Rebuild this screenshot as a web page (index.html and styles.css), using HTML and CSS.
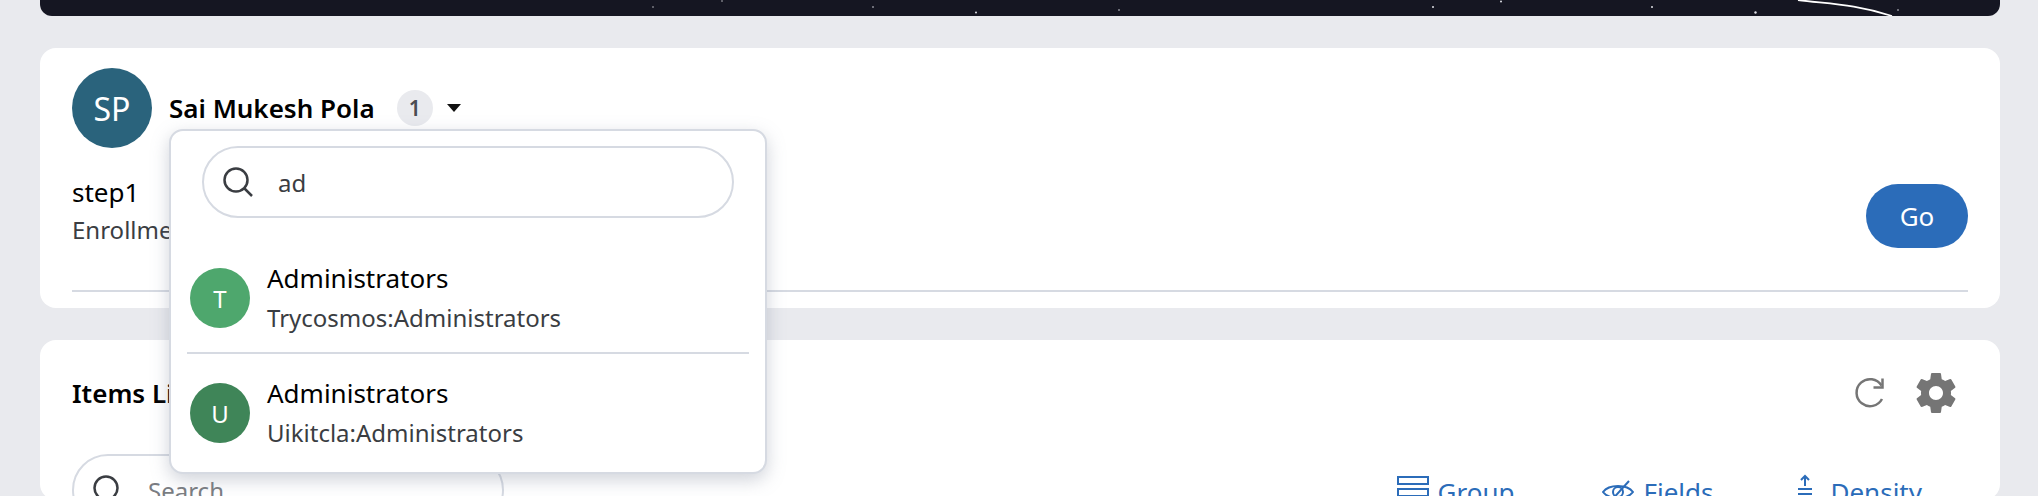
FILE: index.html
```html
<!DOCTYPE html>
<html lang="en">
<head>
<meta charset="utf-8">
<title>Items</title>
<link rel="stylesheet" href="styles.css">
</head>
<body>
<main class="page">
  <div class="banner">
    <svg class="banner-art" viewBox="0 0 1960 16" width="1960" height="16" aria-hidden="true">
      <g fill="#dfe0e6">
        <circle cx="613" cy="7" r=".7"/><circle cx="682" cy="1" r=".7"/><circle cx="833" cy="7" r=".8"/>
        <circle cx="936" cy="12.5" r="1"/><circle cx="1079" cy="10" r=".8"/><circle cx="1393" cy="7" r="1"/>
        <circle cx="1461" cy="1.5" r="1"/><circle cx="1612" cy="7" r="1"/><circle cx="1715.500" cy="12.500" r="1.200"/>
        <circle cx="1858" cy="10" r=".8"/>
      </g>
      <path d="M1758 0C1790 4 1815 4 1852 16" fill="none" stroke="#fff" stroke-width="1.800"/>
    </svg>
  </div>

  <section class="card card-enrol">
    <header class="person">
      <div class="avatar avatar-person">SP</div>
      <div class="person-line">
        <span class="person-name">Sai Mukesh Pola</span>
        <span class="count">1</span>
        <svg class="caret" viewBox="0 0 14 8" width="14" height="8" aria-hidden="true"><path d="M0 0h14L7 8z"/></svg>
      </div>
      <div class="popover">
        <div class="pop-search">
          <svg class="pop-search-icon" viewBox="0 0 30 30" width="30" height="30" aria-hidden="true"><circle cx="13" cy="13" r="11.500"/><path d="M21.500 21.500L29 29"/></svg>
          <span class="pop-search-text">ad</span>
        </div>
        <div class="pop-item">
          <div class="avatar avatar-t">T</div>
          <div class="pop-text">
            <div class="pop-title">Administrators</div>
            <div class="pop-sub">Trycosmos:Administrators</div>
          </div>
        </div>
        <div class="pop-item pop-item-divided">
          <div class="avatar avatar-u">U</div>
          <div class="pop-text">
            <div class="pop-title">Administrators</div>
            <div class="pop-sub">Uikitcla:Administrators</div>
          </div>
        </div>
      </div>
    </header>
    <div class="step">
      <div class="step-text">
        <div class="step-name">step1</div>
        <div class="step-desc">Enrollment</div>
      </div>
      <button class="go" type="button">Go</button>
    </div>
  </section>

  <section class="card card-items">
    <div class="items-head">
      <h2 class="items-title">Items List</h2>
      <div class="items-actions">
        <svg class="refresh" viewBox="0 0 32 32" width="32" height="32" aria-hidden="true"><path d="M27 22A13.500 13.500 0 1 1 26.500 8.500"/><path d="M27.500 1.500V10.500H18.500"/></svg>
        <svg class="gear" viewBox="0 0 24 24" width="48" height="48" aria-hidden="true"><path d="M19.430 12.980c.04-.32.070-.64.070-.98s-.03-.66-.07-.98l2.110-1.650c.19-.15.240-.42.120-.64l-2-3.460c-.12-.22-.39-.30-.61-.22l-2.490 1c-.52-.40-1.080-.73-1.690-.98l-.38-2.650C14.460 2.180 14.250 2 14 2h-4c-.25 0-.46.180-.49.420l-.38 2.650c-.61.250-1.170.590-1.690.98l-2.490-1c-.23-.090-.49 0-.61.220l-2 3.460c-.13.220-.07.490.12.640l2.110 1.650c-.04.320-.07.650-.07.980s.03.660.07.980l-2.110 1.650c-.19.150-.24.420-.12.640l2 3.460c.12.220.39.300.61.220l2.490-1c.52.400 1.080.730 1.690.980l.38 2.650c.03.240.24.420.49.420h4c.25 0 .46-.18.490-.42l.38-2.650c.61-.25 1.170-.59 1.690-.98l2.490 1c.23.090.49 0 .61-.22l2-3.460c.12-.22.07-.49-.12-.64l-2.110-1.650zM12 15.500c-1.930 0-3.500-1.570-3.500-3.500s1.570-3.500 3.500-3.500 3.500 1.570 3.500 3.500-1.570 3.500-3.500 3.500z"/></svg>
      </div>
    </div>
    <div class="toolbar">
      <div class="table-search">
        <svg class="table-search-icon" viewBox="0 0 30 30" width="30" height="30" aria-hidden="true"><circle cx="13" cy="13" r="11.500"/><path d="M21.500 21.500L29 29"/></svg>
        <span class="table-search-text">Search...</span>
      </div>
      <div class="tools">
        <div class="tool tool-group">
          <svg class="tool-icon" viewBox="0 0 32 32" width="32" height="32" aria-hidden="true"><path d="M1 1h30v7H1zM1 13h30v7H1zM1 25h30v7H1z"/></svg>
          <span>Group</span>
        </div>
        <div class="tool tool-fields">
          <svg class="tool-icon" viewBox="0 0 32 24" width="32" height="24" aria-hidden="true"><path d="M1 12C7 4 25 4 31 12C25 20 7 20 1 12Z"/><circle cx="16" cy="12" r="5"/><path d="M7 23L27 1"/></svg>
          <span>Fields</span>
        </div>
        <div class="tool tool-density">
          <svg class="tool-icon" viewBox="0 0 16 36" width="16" height="36" aria-hidden="true"><path d="M8 12V2M4 6l4-4 4 4M1 15h14M1 20h14M8 24v10"/></svg>
          <span>Density</span>
        </div>
      </div>
    </div>
  </section>
</main>
</body>
</html>
```
FILE: styles.css
```css
* { box-sizing: border-box; }
html, body { margin: 0; height: 496px; overflow: hidden; }
body { background: #e9eaee; font-family: "Noto Sans", "Open Sans", sans-serif; color: #000; }
.page { padding: 0 38px 0 40px; display: flex; flex-direction: column; }

.banner { height: 16px; background: #151622; border-radius: 0 0 12px 12px; overflow: hidden; margin-bottom: 32px; flex: none; }
.banner-art { display: block; }

.card { background: #fff; border-radius: 16px; padding: 20px 32px; flex: none; }
.card-enrol { height: 260px; margin-bottom: 32px; }
.card-items { height: 160px; padding-top: 28px; }

.avatar { border-radius: 50%; color: #fff; display: flex; align-items: center; justify-content: center; flex: none; }
.person { display: flex; align-items: flex-start; position: relative; height: 80px; }
.avatar-person { width: 80px; height: 80px; background: #2a637c; font-size: 32px; }
.person-line { display: flex; align-items: center; height: 36px; margin: 22px 0 0 17px; }
.person-name { font-size: 26px; font-weight: 600; line-height: 36px; }
.count { width: 36px; height: 36px; border-radius: 50%; background: #e9eaee; color: #4a4d52; font-size: 21px; font-weight: 600; display: flex; align-items: center; justify-content: center; margin-left: 22px; }
.caret { margin-left: 14px; fill: #111; }

.popover { position: absolute; left: 97px; top: 61px; width: 598px; height: 345px; background: #fff; border: 2px solid #d6dae2; border-radius: 14px; box-shadow: 0 6px 18px rgba(120,130,150,.35); padding: 15px 31px 0 31px; z-index: 5; }
.pop-search { height: 72px; border: 2px solid #d6dae2; border-radius: 36px; display: flex; align-items: center; padding-left: 19px; }
.pop-search-icon { fill: none; stroke: #3a3d42; stroke-width: 2.500; }
.pop-search-text { margin-left: 25px; font-size: 24px; color: #3a3d42; }
.pop-item { display: flex; align-items: center; margin: 0 -15px; padding: 0 0 0 3px; gap: 17px; }
.pop-item:first-of-type { margin-top: 0; }
.pop-search + .pop-item { margin-top: 26px; height: 110px; padding-bottom: 0; border-bottom: 2px solid #d6dae2; }
.pop-item-divided { height: 118px; }
.pop-item .avatar { width: 60px; height: 60px; font-size: 24px; }
.avatar-t { background: #4ea76d; }
.avatar-u { background: #3f8558; }
.pop-text { display: flex; flex-direction: column; gap: 10px; }
.pop-title { font-size: 26px; line-height: 30px; color: #000; }
.pop-sub { font-size: 24px; line-height: 30px; color: #3a3d42; }

.step { height: 124px; margin-top: 20px; border-bottom: 2px solid #d6dae2; display: flex; justify-content: space-between; align-items: flex-start; }
.step-text { padding-top: 9px; display: flex; flex-direction: column; gap: 8px; }
.step-name { font-size: 26px; line-height: 30px; }
.step-desc { font-size: 24px; line-height: 30px; color: #3a3d42; }
.go { width: 102px; height: 64px; margin-top: 16px; border: 0; border-radius: 32px; background: #2b6cb9; color: #fff; font: 26px "Noto Sans", sans-serif; }

.items-head { display: flex; justify-content: space-between; align-items: center; height: 50px; padding-right: 8px; }
.items-title { margin: 0; font-size: 26px; font-weight: 600; }
.items-actions { display: flex; align-items: center; gap: 25px; }
.refresh { fill: none; stroke: #757575; stroke-width: 2.500; }
.gear { fill: #757575; }

.toolbar { display: flex; justify-content: space-between; align-items: flex-start; margin-top: 36px; }
.table-search { width: 432px; height: 72px; border: 2px solid #d6dae2; border-radius: 36px; display: flex; align-items: center; padding-left: 19px; }
.table-search-icon { fill: none; stroke: #3a3d42; stroke-width: 2.500; flex: none; }
.table-search-text { margin-left: 25px; font-size: 24px; color: #7a7d82; }
.tools { display: flex; align-items: center; color: #2b6cb9; font-size: 26px; margin-top: 20px; padding-right: 46px; }
.tool { display: flex; align-items: center; gap: 9px; }
.tool-fields { margin-left: 88px; }
.tool-density { margin-left: 84px; gap: 17px; }
.tool-icon { fill: none; stroke: #2b6cb9; stroke-width: 2; flex: none; }
```
